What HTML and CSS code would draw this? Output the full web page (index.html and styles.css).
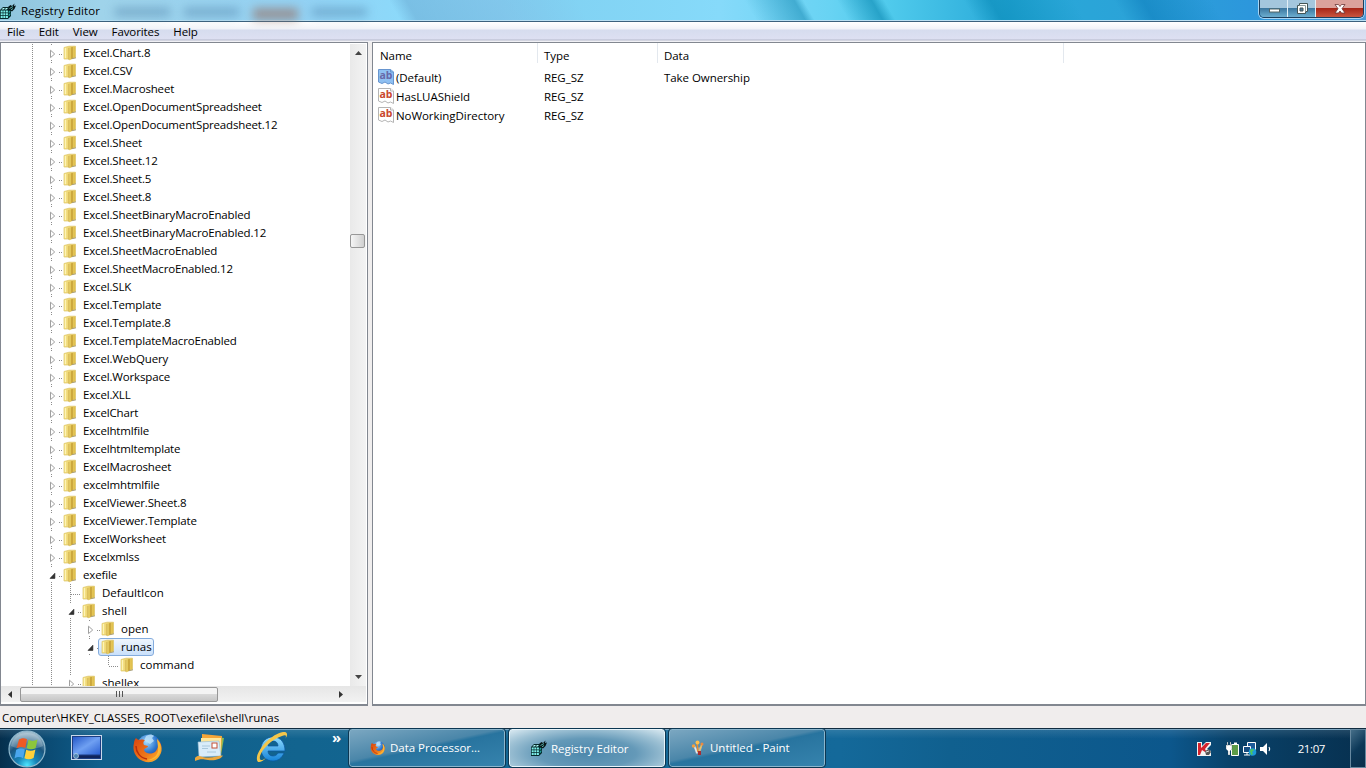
FILE: index.html
```html
<!DOCTYPE html>
<html lang="en">
<head>
    <meta charset="UTF-8">
    <meta name="viewport" content="width=device-width, initial-scale=1.0">
    <title>Registry Editor</title>
    <link rel="stylesheet" href="styles.css">
</head>
<body>
    <svg class="defs" width="0" height="0">
        <defs>
            <linearGradient id="gold" x1="0" x2="1"><stop offset="0" stop-color="#f7e58c"/><stop offset="1" stop-color="#dfbd49"/></linearGradient>
            <linearGradient id="gold2" x1="0" x2="1"><stop offset="0" stop-color="#fdec84"/><stop offset="1" stop-color="#c79f2f"/></linearGradient>
            <radialGradient id="orb" cx=".5" cy=".95" r=".9"><stop offset="0" stop-color="#4fe6ff"/><stop offset=".3" stop-color="#1784b8"/><stop offset=".65" stop-color="#1b567f"/><stop offset="1" stop-color="#9fbccd"/></radialGradient>
            <linearGradient id="screen" x1="0" y1="0" x2="1" y2="1"><stop offset="0" stop-color="#2458c8"/><stop offset=".5" stop-color="#6fa0f2"/><stop offset="1" stop-color="#2a5fd2"/></linearGradient>
            <radialGradient id="globe" cx=".4" cy=".3" r=".8"><stop offset="0" stop-color="#a5dcff"/><stop offset=".5" stop-color="#2f78cf"/><stop offset="1" stop-color="#122c80"/></radialGradient>
            <linearGradient id="fox" x1="0" y1="0" x2="1" y2="1"><stop offset="0" stop-color="#d8430f"/><stop offset=".6" stop-color="#ef7a1a"/><stop offset="1" stop-color="#ffc63a"/></linearGradient>
            <linearGradient id="ie" x1="0" y1="0" x2="0" y2="1"><stop offset="0" stop-color="#8fdcff"/><stop offset="1" stop-color="#1583d8"/></linearGradient>
            <symbol id="folder" viewBox="0 0 14 16">
                <path d="M1 2.5 6 1.2h6.5v11.3L8 14H1z" fill="url(#gold)" stroke="#dcc465" stroke-width=".7"/>
                <path d="M6.2 3.2 9 2v11.8l-2.8 1.7z" fill="url(#gold2)"/>
                <path d="M2.5 3v10" stroke="#fdf4b8" stroke-width="1.2"/>
                <path d="M9.3 2v11.500" stroke="#b8912e" stroke-width=".7"/>
                <path d="M6 3v12" stroke="#bd9a3a" stroke-width=".7"/>
                <path d="M9 13.7l4-.9" stroke="#a39a7a" stroke-width=".9"/>
            </symbol>
            <symbol id="closed" viewBox="0 0 7 10"><path d="M1.5 1.2v7.4L5.7 5z" fill="#fff" stroke="#a0a0a0"/></symbol>
            <symbol id="opened" viewBox="0 0 7 10"><path d="M5.900 2.2v5.200H1z" fill="#333" stroke="#1e1e1e" stroke-width=".6"/></symbol>
            <symbol id="regedit" viewBox="0 0 16 16">
                <path d="M0 7l3-3h5l3 3v6l-3 3H0z" fill="#05292b"/>
                <path d="M.7 7.500h2v2h-2zM3.300 7.500h2v2h-2zM5.900 7.500h2v2h-2zM.7 10.200h2v2h-2zM3.300 10.200h2v2h-2zM5.900 10.200h2v2h-2zM.7 12.900h2v2h-2zM3.300 12.900h2v2h-2zM5.900 12.900h2v2h-2z" fill="#7df0ea"/>
                <path d="M3 5h2l-1.500 1.600h-2zM6 5h2L6.500 6.600h-2z" fill="#b6fffb"/>
                <path d="M8.600 8.500l1.700-1.500v2l-1.700 1.500zM8.600 11.500l1.700-1.500v2l-1.700 1.500z" fill="#1fa09c"/>
                <path d="M8 4l2.500-2 1.500 1 2.500-2.500L14 3l2-.5-1.500 3.500L12 8.500 9 7z" fill="#071618"/>
                <path d="M9.500 5.500l3.500-2M11 6.800l2-1.300" stroke="#6ed0cc" stroke-width=".8"/>
            </symbol>
            <symbol id="firefox" viewBox="0 0 32 32">
                <circle cx="17" cy="15" r="12.500" fill="url(#globe)"/>
                <path d="M14 4c3-2 6-2 8 0l-2 2 2 3-4 3-3-2-3-1z" fill="#bfe4fa" opacity=".8"/>
                <path d="M4 6c1 1 2 2 4 2 2-1 4 0 5 0-2 2-2 3-1 5l4 1c0 2-4 2-4 4 1 4 8 5 12 1 2-3 3-7 1-12 5 4 6 11 3 16-3 6-10 9-17 6C3 26 0 18 2 11c0-2 1-4 2-5z" fill="url(#fox)"/>
                <path d="M25 7c5 5 5 12 1 17-3 3-7 5-11 4 7-1 12-5 11-13z" fill="#fbb936"/>
                <path d="M4 14c0 6 4 12 11 13" fill="none" stroke="#b92e0c" stroke-width="1.500"/>
            </symbol>
            <symbol id="ab" viewBox="0 0 16 16">
                <path d="M.5 .5h12l3 2.500v12.500l-3-1.500-2.500 1-3-2-3 1.500-3.500-1.500z"/>
                <path d="M12.500 .5V3h3"/>
            </symbol>
        </defs>
    </svg>

    <div class="titlebar">
        <svg class="app-icon"><use href="#regedit"/></svg>
        <h1>Registry Editor</h1>
        <div class="glass"><i></i><i></i><i class="warm"></i><i></i></div>
        <div class="window-buttons">
            <button class="min" aria-label="Minimize"><svg width="14" height="14"><rect x="2.500" y="7" width="10" height="3" fill="#fff" stroke="#566"/></svg></button>
            <button class="max" aria-label="Restore"><svg width="14" height="14"><path d="M4.500 1.500h8v8h-2v2h-8v-8h2z" fill="#fff" stroke="#455"/><path d="M5 6h3v3H5z" fill="#4c7fa6" stroke="#455"/><path d="M4.500 3.500h6v6" fill="none" stroke="#899"/></svg></button>
            <button class="close" aria-label="Close"><svg width="14" height="14"><path d="M2 2.500h3.500L7 4.500l1.500-2H12L9 6.700 12 11H8.500L7 9l-1.500 2H2l3-4.300z" fill="#fff" stroke="#6b3535" stroke-width=".8"/></svg></button>
        </div>
    </div>

    <nav class="menubar">
        <a>File</a><a>Edit</a><a>View</a><a>Favorites</a><a>Help</a>
    </nav>

    <main class="panes">
        <section class="tree-pane">
            <div class="tree-row">
                <ul class="tree">
                    <li><svg class="arrow"><use href="#closed"/></svg><i></i><svg class="folder"><use href="#folder"/></svg><span>Excel.Chart.8</span></li>
                    <li><svg class="arrow"><use href="#closed"/></svg><i></i><svg class="folder"><use href="#folder"/></svg><span>Excel.CSV</span></li>
                    <li><svg class="arrow"><use href="#closed"/></svg><i></i><svg class="folder"><use href="#folder"/></svg><span>Excel.Macrosheet</span></li>
                    <li><svg class="arrow"><use href="#closed"/></svg><i></i><svg class="folder"><use href="#folder"/></svg><span>Excel.OpenDocumentSpreadsheet</span></li>
                    <li><svg class="arrow"><use href="#closed"/></svg><i></i><svg class="folder"><use href="#folder"/></svg><span>Excel.OpenDocumentSpreadsheet.12</span></li>
                    <li><svg class="arrow"><use href="#closed"/></svg><i></i><svg class="folder"><use href="#folder"/></svg><span>Excel.Sheet</span></li>
                    <li><svg class="arrow"><use href="#closed"/></svg><i></i><svg class="folder"><use href="#folder"/></svg><span>Excel.Sheet.12</span></li>
                    <li><svg class="arrow"><use href="#closed"/></svg><i></i><svg class="folder"><use href="#folder"/></svg><span>Excel.Sheet.5</span></li>
                    <li><svg class="arrow"><use href="#closed"/></svg><i></i><svg class="folder"><use href="#folder"/></svg><span>Excel.Sheet.8</span></li>
                    <li><svg class="arrow"><use href="#closed"/></svg><i></i><svg class="folder"><use href="#folder"/></svg><span>Excel.SheetBinaryMacroEnabled</span></li>
                    <li><svg class="arrow"><use href="#closed"/></svg><i></i><svg class="folder"><use href="#folder"/></svg><span>Excel.SheetBinaryMacroEnabled.12</span></li>
                    <li><svg class="arrow"><use href="#closed"/></svg><i></i><svg class="folder"><use href="#folder"/></svg><span>Excel.SheetMacroEnabled</span></li>
                    <li><svg class="arrow"><use href="#closed"/></svg><i></i><svg class="folder"><use href="#folder"/></svg><span>Excel.SheetMacroEnabled.12</span></li>
                    <li><svg class="arrow"><use href="#closed"/></svg><i></i><svg class="folder"><use href="#folder"/></svg><span>Excel.SLK</span></li>
                    <li><svg class="arrow"><use href="#closed"/></svg><i></i><svg class="folder"><use href="#folder"/></svg><span>Excel.Template</span></li>
                    <li><svg class="arrow"><use href="#closed"/></svg><i></i><svg class="folder"><use href="#folder"/></svg><span>Excel.Template.8</span></li>
                    <li><svg class="arrow"><use href="#closed"/></svg><i></i><svg class="folder"><use href="#folder"/></svg><span>Excel.TemplateMacroEnabled</span></li>
                    <li><svg class="arrow"><use href="#closed"/></svg><i></i><svg class="folder"><use href="#folder"/></svg><span>Excel.WebQuery</span></li>
                    <li><svg class="arrow"><use href="#closed"/></svg><i></i><svg class="folder"><use href="#folder"/></svg><span>Excel.Workspace</span></li>
                    <li><svg class="arrow"><use href="#closed"/></svg><i></i><svg class="folder"><use href="#folder"/></svg><span>Excel.XLL</span></li>
                    <li><svg class="arrow"><use href="#closed"/></svg><i></i><svg class="folder"><use href="#folder"/></svg><span>ExcelChart</span></li>
                    <li><svg class="arrow"><use href="#closed"/></svg><i></i><svg class="folder"><use href="#folder"/></svg><span>Excelhtmlfile</span></li>
                    <li><svg class="arrow"><use href="#closed"/></svg><i></i><svg class="folder"><use href="#folder"/></svg><span>Excelhtmltemplate</span></li>
                    <li><svg class="arrow"><use href="#closed"/></svg><i></i><svg class="folder"><use href="#folder"/></svg><span>ExcelMacrosheet</span></li>
                    <li><svg class="arrow"><use href="#closed"/></svg><i></i><svg class="folder"><use href="#folder"/></svg><span>excelmhtmlfile</span></li>
                    <li><svg class="arrow"><use href="#closed"/></svg><i></i><svg class="folder"><use href="#folder"/></svg><span>ExcelViewer.Sheet.8</span></li>
                    <li><svg class="arrow"><use href="#closed"/></svg><i></i><svg class="folder"><use href="#folder"/></svg><span>ExcelViewer.Template</span></li>
                    <li><svg class="arrow"><use href="#closed"/></svg><i></i><svg class="folder"><use href="#folder"/></svg><span>ExcelWorksheet</span></li>
                    <li><svg class="arrow"><use href="#closed"/></svg><i></i><svg class="folder"><use href="#folder"/></svg><span>Excelxmlss</span></li>
                    <li><svg class="arrow"><use href="#opened"/></svg><i></i><svg class="folder"><use href="#folder"/></svg><span>exefile</span></li>
                    <li class="level1 leaf"><i></i><svg class="folder"><use href="#folder"/></svg><span>DefaultIcon</span></li>
                    <li class="level1"><svg class="arrow"><use href="#opened"/></svg><i></i><svg class="folder"><use href="#folder"/></svg><span>shell</span></li>
                    <li class="level2"><svg class="arrow"><use href="#closed"/></svg><i></i><svg class="folder"><use href="#folder"/></svg><span>open</span></li>
                    <li class="level2 selected"><svg class="arrow"><use href="#opened"/></svg><i></i><b><svg class="folder"><use href="#folder"/></svg><span>runas</span></b></li>
                    <li class="level3 leaf"><i></i><svg class="folder"><use href="#folder"/></svg><span>command</span></li>
                    <li class="level1"><svg class="arrow"><use href="#closed"/></svg><i></i><svg class="folder"><use href="#folder"/></svg><span>shellex</span></li>
                </ul>
                <div class="vscroll">
                    <svg width="7" height="4"><path d="M0 4l3.500-4L7 4z" fill="#444"/></svg>
                    <div class="thumb"></div>
                    <svg width="7" height="4"><path d="M0 0l3.500 4L7 0z" fill="#444"/></svg>
                </div>
            </div>
            <div class="hscroll">
                <svg width="4" height="7"><path d="M4 0L0 3.500 4 7z" fill="#333"/></svg>
                <div class="thumb"><i></i><i></i><i></i></div>
                <svg width="4" height="7"><path d="M0 0l4 3.500L0 7z" fill="#333"/></svg>
            </div>
        </section>

        <section class="values-pane">
            <div class="row head"><div>Name</div><div>Type</div><div>Data</div></div>
            <div class="row picked">
                <div><svg class="value-icon"><use href="#ab"/><text x="1.500" y="10">ab</text></svg>(Default)</div><div>REG_SZ</div><div>Take Ownership</div>
            </div>
            <div class="row">
                <div><svg class="value-icon"><use href="#ab"/><text x="1.500" y="10">ab</text></svg>HasLUAShield</div><div>REG_SZ</div><div></div>
            </div>
            <div class="row">
                <div><svg class="value-icon"><use href="#ab"/><text x="1.500" y="10">ab</text></svg>NoWorkingDirectory</div><div>REG_SZ</div><div></div>
            </div>
        </section>
    </main>

    <div class="statusbar">Computer\HKEY_CLASSES_ROOT\exefile\shell\runas</div>

    <footer class="taskbar">
        <svg class="start" viewBox="0 0 38 38">
            <circle cx="19" cy="19" r="18" fill="url(#orb)" stroke="#8fb8cd" stroke-width="1.200"/>
            <path d="M3 16C5 6 12 3 19 3s14 3 16 13c-9 4-22 5-32 0z" fill="#fff" opacity=".22"/>
            <path d="M11 9.500c3.500-2 5.500-1.500 8-.3L17.300 18c-3-1.600-5.500-1.400-8.800.3z" fill="#ee5a24"/>
            <path d="M20.500 9.800c3 1.700 5.700 1.400 9-.3L27.700 18c-3.200 1.700-6 1.700-9 0z" fill="#8cc63c"/>
            <path d="M8.200 19.800c3.300-1.800 5.800-1.700 8.700-.2l-1.800 8.600c-3-1.500-5.300-1.500-8.600.2z" fill="#4aa7ee"/>
            <path d="M18.200 19.700c3.200 1.600 6 1.500 9.200-.2l-1.800 8.600c-3.300 1.700-6.200 1.600-9.200.2z" fill="#ffd13b"/>
        </svg>
        <div class="launch">
            <svg width="31" height="25" viewBox="0 0 31 25"><rect x=".5" y=".5" width="30" height="24" fill="#1c3d82" stroke="#c9d8ea"/><rect x="2" y="2" width="27" height="17.500" fill="url(#screen)"/><path d="M2 20.500h27v2.500H2z" fill="#10245a"/><circle cx="5" cy="21" r="2.500" fill="#4d84b4" stroke="#c2dcec" stroke-width=".7"/></svg>
            <svg width="32" height="32"><use href="#firefox"/></svg>
            <svg width="32" height="30" viewBox="0 0 32 30">
                <path d="M9 2l21 3-3 17L8 20z" fill="#8ab955"/><path d="M8 1l20 2-1 18H8z" fill="#f5a638"/><path d="M7 5h20v15H7z" fill="#ffe79a"/>
                <path d="M4 9l21-1 2 15-22 1z" fill="#d9edfa" stroke="#91b9d2" stroke-width=".6"/><rect x="18" y="10" width="5" height="5" fill="#fff" stroke="#c34f35"/><path d="M8 13h8M8 15.500h6M13 19h9" stroke="#a9c8dc"/>
                <path d="M1 25c3-4 6-1 11-.500 7 .7 13-2 17-2-2 4-9 5.500-15 4.500C8 26 6 26 1 28z" fill="#eda83d"/>
            </svg>
            <svg width="34" height="32" viewBox="0 0 34 32">
                <path d="M28 21c-2 5-6 8-11 8-7 0-12-5-12-12S10 5 17 5c8 0 12 6 12 14H12c0 3 2 5 5 5 2 0 4-1 5-3zM12 14h10c0-3-2-5-5-5s-5 2-5 5z" fill="url(#ie)" stroke="#0c579f" stroke-width=".7"/>
                <path d="M29 7c2-3 1-5-3-3C16 7 6 17 4 24c-1 5 2 5 6 2-5 5-10 6-9-1C3 15 16 2 27 0c5-1 5 4 2 7z" fill="#f3c64a"/>
            </svg>
            <span class="more">»</span>
        </div>
        <div class="tasks">
            <div class="task"><svg width="16" height="16"><use href="#firefox"/></svg><span>Data Processor...</span></div>
            <div class="task active"><svg width="16" height="16"><use href="#regedit"/></svg><span>Registry Editor</span></div>
            <div class="task"><svg width="16" height="16" viewBox="0 0 16 16"><path d="M4 8l2 6h4l2-7z" fill="#8fabc0"/><path d="M4 5l3 8" stroke="#e9e9e9" stroke-width="1.500"/><path d="M7 2l1 10" stroke="#e98c2c" stroke-width="1.500"/><path d="M12 4L9 12" stroke="#f4c15c" stroke-width="1.500"/><circle cx="3.500" cy="6" r="1.700" fill="#f6a13b"/><circle cx="7.500" cy="2.500" r="2" fill="#ffbf4a"/><circle cx="12" cy="4" r="1.500" fill="#ed8a40"/><path d="M8 11h3v4H8z" fill="#a82d32"/></svg><span>Untitled - Paint</span></div>
        </div>
        <div class="tray">
            <svg class="kasper" width="15" height="14" viewBox="0 0 15 14"><path d="M0 0h5v4l4-4h5v3l-4 4 4 2v5H0z" fill="#f3f3f3"/><path d="M1 1h3v5l5-5h4L8 7l1 2-1 1-3-2-2 5H1z" fill="#d3232d"/><path d="M8 9l4-2 2 3-2 3H9z" fill="#555"/><path d="M9 10l3-1" stroke="#ddd"/></svg>
            <svg width="15" height="16" viewBox="0 0 15 16"><path d="M6.500 3.500h7v11h-7z" fill="#5d9c48" stroke="#fff"/><path d="M9 1.500h3v2H9z" fill="#fff"/><path d="M1 4h6v4L5 10v4H3v-4L1 8zM2 1h1v3H2zM5 1h1v3H5z" fill="#fff" stroke="#345" stroke-width=".3"/></svg>
            <svg width="15" height="16" viewBox="0 0 15 16"><path d="M5.500 1.500h8v7h-8z" fill="#1e5b9a" stroke="#fff"/><path d="M1.500 5.500h7v6h-7z" fill="#174d80" stroke="#fff"/><path d="M2 14h6M5 11v3" stroke="#fff"/><circle cx="10.500" cy="11" r="3.800" fill="#1c9bd8"/><path d="M8 10c1-3 3-2 4-1l-2 2 1 2-2 1z" fill="#4dc45d"/></svg>
            <svg width="15" height="16" viewBox="0 0 15 16"><path d="M1 6h3l4-4v12l-4-4H1z" fill="#fff"/><path d="M10 6q1.500 2 0 4" fill="none" stroke="#fff" stroke-width="1.200"/></svg>
            <time>21:07</time>
            <div class="show-desktop"></div>
        </div>
    </footer>
</body>
</html>
```
FILE: styles.css
```css
* {
    box-sizing: border-box;
}

body {
    margin: 0;
    width: 1366px;
    height: 768px;
    display: flex;
    flex-direction: column;
    overflow: hidden;
    font-family: "Open Sans", "Noto Sans", sans-serif;
    font-size: 11.5px;
    letter-spacing: -0.1px;
    color: #000;
    background: #f0eeee;
}

svg {
    display: block;
    flex: none;
}

.defs {
    position: absolute;
}

/* title bar */
.titlebar {
    display: flex;
    height: 22px;
    flex: none;
    border-bottom: 1px solid #3b617d;
    box-shadow: inset 0 -1px 0 #b9dff2;
    background:
        linear-gradient(60deg, transparent 347px, rgba(110,175,215,.6) 362px, rgba(130,190,230,.5) 440px, transparent 510px 655px, rgba(40,150,190,.65) 698px, transparent 706px 735px, rgba(20,145,185,.7) 765px, transparent 776px 845px, rgba(0,130,175,.5) 868px, transparent 940px 975px, rgba(0,110,175,.4) 1000px, transparent 1060px),
        linear-gradient(90deg, #8fc4dc 0, #9fd3ea 100px, #93d1f3 300px, #8cd9fa 400px, #80cff0 500px, #86dafa 720px, #68d3f3 830px, #4fcaec 890px, #28a9d8 1010px, #2ba3d8 1130px, #2c97dc 1250px, #4b9bd8 100%);
}

.app-icon {
    width: 16px;
    height: 16px;
    margin-top: 3px;
}

.titlebar h1 {
    margin: 0 0 0 5px;
    width: 80px;
    font-size: 11.5px;
    font-weight: normal;
    letter-spacing: 0.08px;
    line-height: 21px;
    white-space: nowrap;
}

/* what shows through the glass from the window behind */
.glass {
    display: flex;
    gap: 14px;
    padding: 8px 0 0 14px;
    flex: 1;
    filter: blur(5px);
}

.glass i {
    width: 55px;
    height: 8px;
    background: rgba(70,120,160,.45);
}

.glass i.warm {
    background: rgba(150,115,105,.65);
    height: 12px;
    width: 45px;
}

.window-buttons {
    display: flex;
    width: 105px;
    height: 18px;
    margin-right: 2px;
    border: 1px solid #1d3e5c;
    border-top: 0;
    border-radius: 0 0 5px 5px;
    overflow: hidden;
    box-shadow: 0 0 0 1px rgba(220,240,255,.7);
}

.window-buttons button {
    display: flex;
    justify-content: center;
    align-items: center;
    padding: 0;
    border: 0;
    border-right: 1px solid #e1eef6;
    width: 28px;
    background: linear-gradient(#a4c6dd 0 45%, #3d78a0 50%, #6caed0);
}

.window-buttons .close {
    width: 47px;
    border-right: 0;
    background: linear-gradient(#dba29b 0 45%, #a82718 50%, #c9553f);
}

/* menu */
.menubar {
    display: flex;
    flex: none;
    height: 20px;
    padding-left: 7px;
    gap: 14px;
    line-height: 20px;
    background: linear-gradient(#fff 0, #f0f2f8 7px, #d6dcee 8px, #dde0f2 17px, #b4b8ca 18px, #f0f0f5 19px);
}

/* panes */
.panes {
    display: flex;
    flex: none;
    height: 664px;
    gap: 4px;
}

.tree-pane {
    display: flex;
    flex-direction: column;
    width: 368px;
    border: 1px solid #828790;
    border-bottom-width: 2px;
    padding: 1px 1px 2px 0;
    background: #fff;
}

.tree-row {
    display: flex;
    height: 643px;
    overflow: hidden;
}

.tree {
    --dots: linear-gradient(#8c8c8c 50%, transparent 50%);
    list-style: none;
    margin: 0;
    padding: 0;
    width: 349px;
    letter-spacing: -0.16px;
    background: var(--dots) 31px 0 / 1px 2px repeat-y;
}

.tree li {
    display: flex;
    align-items: center;
    height: 18px;
    padding-left: 48px;
    white-space: nowrap;
    background: var(--dots) 50px 0 / 1px 2px repeat-y;
}

.tree li.level1 {
    padding-left: 67px;
    background: var(--dots) 50px 0 / 1px 2px repeat-y, var(--dots) 69px 0 / 1px 2px repeat-y;
}

.tree li.level2 {
    padding-left: 86px;
    background: var(--dots) 50px 0 / 1px 2px repeat-y, var(--dots) 69px 0 / 1px 2px repeat-y, var(--dots) 88px 0 / 1px 2px repeat-y;
}

.tree li.level3 {
    padding-left: 105px;
    background: var(--dots) 50px 0 / 1px 2px repeat-y, var(--dots) 69px 0 / 1px 2px repeat-y, linear-gradient(#fff, #fff) 107px 10px / 1px 8px no-repeat, var(--dots) 107px 0 / 1px 2px repeat-y;
}

.tree li.level1,
.tree li.level2,
.tree li.level3 {
    letter-spacing: 0;
}

.tree i {
    width: 3px;
    height: 1px;
    margin: 2px 1px 0 3px;
    background: repeating-linear-gradient(90deg, #8c8c8c 0 1px, transparent 1px 2px);
}

.tree .leaf i {
    width: 10px;
    margin-left: 3px;
}

.arrow {
    width: 7px;
    height: 14px;
    padding: 3px 0 1px;
    background: #fff;
}

.folder {
    width: 14px;
    height: 16px;
}

.tree span {
    margin-left: 6px;
    line-height: 17px;
    padding-bottom: 1px;
}

.tree b {
    display: flex;
    align-items: center;
    width: 56px;
    height: 18px;
    margin-left: -3px;
    padding-left: 2px;
    font-weight: normal;
    border: 1px solid #84acdd;
    border-radius: 3px;
    background: linear-gradient(#eff6fe, #c9e0fb);
}

.vscroll {
    display: flex;
    flex-direction: column;
    align-items: center;
    width: 16px;
    padding: 7px 0;
    background: linear-gradient(90deg, #e9e9e9, #f3f3f3);
}

.vscroll .thumb {
    width: 15px;
    height: 15px;
    margin: 179px 1px 427px 0;
    border: 1px solid #979797;
    border-radius: 2px;
    background: linear-gradient(90deg, #f5f5f5, #d0d0d0);
}

.hscroll {
    display: flex;
    align-items: center;
    height: 16px;
    padding: 0 23px 0 7px;
    background: linear-gradient(#e6e6e6, #f2f2f2);
}

.hscroll .thumb {
    display: flex;
    justify-content: center;
    align-items: center;
    gap: 2px;
    width: 198px;
    height: 15px;
    margin: 0 auto 0 8px;
    border: 1px solid #979797;
    border-radius: 2px;
    background: linear-gradient(#f4f4f4 0 45%, #d9d9d9 50%, #c6c6c6);
}

.hscroll .thumb i {
    width: 1px;
    height: 6px;
    background: #555;
}

.values-pane {
    flex: 1;
    border: 1px solid #828790;
    border-bottom-width: 2px;
    background: #fff;
}

.row {
    display: grid;
    grid-template-columns: 165px 120px 406px;
    height: 19px;
    line-height: 20px;
    letter-spacing: -0.06px;
}

.row > div {
    display: flex;
    gap: 2px;
    padding-left: 6px;
}

.row > div:first-child {
    padding-left: 5px;
}

.row.head {
    height: 25px;
    line-height: 26px;
}

.row.head > div {
    height: 20px;
    border-right: 1px solid #e3e8ee;
}

.row.head > div:first-child {
    padding-left: 7px;
}

.value-icon {
    width: 16px;
    height: 16px;
    margin-top: 1px;
    fill: #fff;
    stroke: #b5b5b5;
}

.value-icon text {
    font: bold 10.5px "Open Sans", sans-serif;
    fill: #c9482c;
    stroke: none;
}

.picked .value-icon {
    fill: #8fc0f2;
    stroke: #6795cf;
}

.picked .value-icon text {
    fill: #6768a8;
}

.statusbar {
    flex: none;
    height: 22px;
    padding-left: 2px;
    line-height: 23px;
    letter-spacing: 0;
    background: #f0eded;
}

/* taskbar */
.taskbar {
    display: flex;
    flex: none;
    height: 40px;
    border-top: 1px solid #102c40;
    box-shadow: inset 0 1px 0 #7fa9c4;
    color: #fff;
    background:
        linear-gradient(rgba(255,255,255,.12), transparent 25%),
        linear-gradient(90deg, #052f4d 0, #0a4870 40px, #105f8c 100px, #12648f 300px, #14699a 840px, #10608f 950px, #0c578c 1170px, #09426a 1230px, #07304f 1366px);
}

.start {
    width: 38px;
    height: 38px;
    margin: 1px 0 0 8px;
}

.launch {
    display: flex;
    align-items: center;
    gap: 30px;
    padding: 0 0 2px 25px;
    width: 303px;
}

.more {
    align-self: flex-start;
    margin-left: 12px;
    font-size: 15px;
    font-weight: bold;
    line-height: 16px;
}

.tasks {
    display: flex;
    gap: 4px;
}

.task {
    display: flex;
    align-items: center;
    gap: 4px;
    width: 156px;
    height: 38px;
    padding-left: 20px;
    border: 1px solid #8bb6cd;
    border-radius: 3px;
    outline: 1px solid #0c3752;
    background: linear-gradient(168deg, #7ba7c1 0, #4a86a9 45%, #28749f 50%, #3683ad 100%);
}

.task span {
    letter-spacing: -0.02px;
    padding-bottom: 2px;
}

.task.active {
    padding-left: 21px;
    border-color: #e8f5fb;
    background: radial-gradient(ellipse at 50% 65%, #4d88ac 0, #6499b8 45%, #9fc2d5 75%, #d9e9f1 100%);
}

.task.active span {
    padding-bottom: 0;
}

.tray {
    display: flex;
    align-items: center;
    margin-left: auto;
    gap: 2px;
}

.tray .kasper {
    margin-right: 11px;
}

.tray time {
    margin: 0 23px 0 22px;
    letter-spacing: -0.4px;
}

.show-desktop {
    width: 16px;
    height: 39px;
    border: 1px solid #6789a0;
    background: linear-gradient(135deg, #456e88, #0c3858 50%, #0a2e4a);
}
```
